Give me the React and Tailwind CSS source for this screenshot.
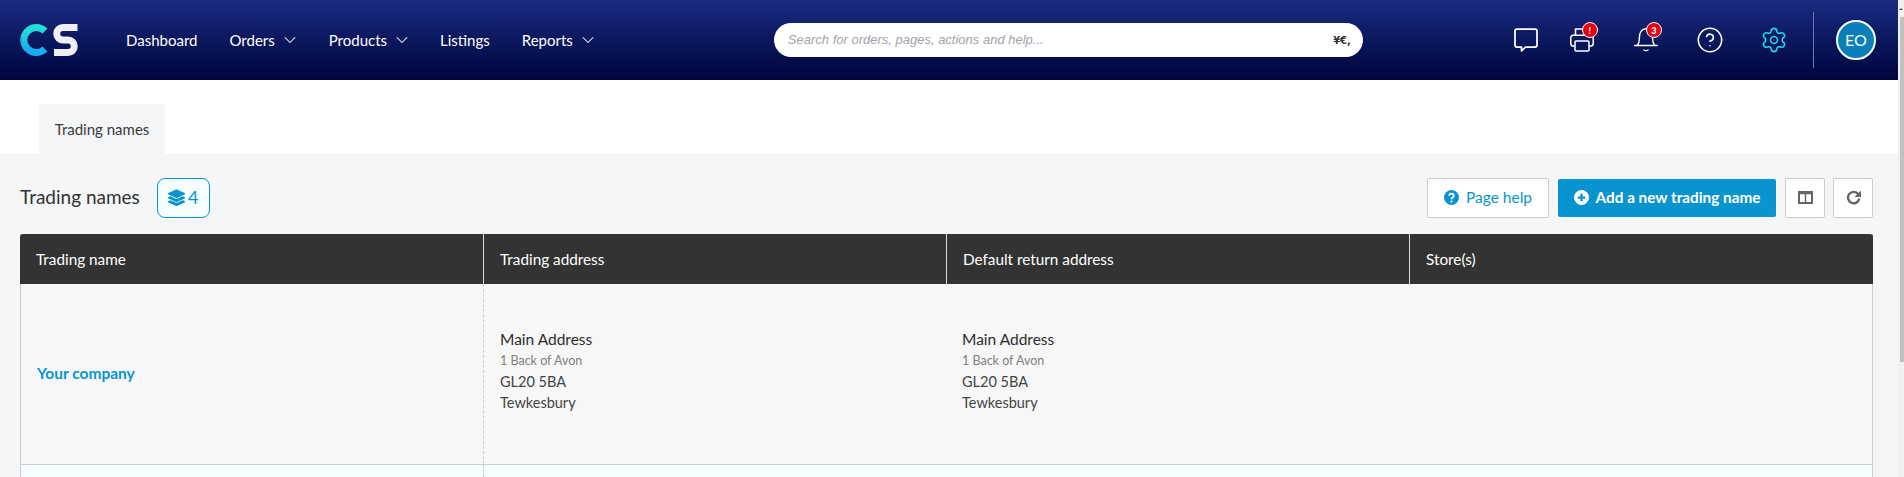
import React from "react";
import { ChevronDown, CircleHelp, Settings } from "lucide-react";

const font = "font-['Lato','Open_Sans',sans-serif]";

const NavItem = ({ label, hasMenu, className = "" }) => (
  <div className={`flex items-center gap-[5px] text-[15px] text-white ${className}`}>
    <span>{label}</span>
    {hasMenu && <ChevronDown size={20} strokeWidth={1.25} className="-mr-[3px]" />}
  </div>
);

const Logo = () => (
  <svg width="58" height="32" viewBox="0 0 58 32" className="shrink-0">
    <defs>
      <linearGradient id="cs-c" x1="0" y1="0" x2="0" y2="1">
        <stop offset="0" stopColor="#22e0d8" />
        <stop offset="1" stopColor="#1aa8f0" />
      </linearGradient>
    </defs>
    <path
      d="M25 7 A12.5 12.5 0 1 0 25 25"
      fill="none"
      stroke="url(#cs-c)"
      strokeWidth="7"
    />
    <path
      d="M57.5 3.5 H43 A6.25 6.25 0 0 0 43 16 H48 A6.25 6.25 0 0 1 48 28.5 H34"
      fill="none"
      stroke="#eef0f5"
      strokeWidth="7"
    />
  </svg>
);

const Badge = ({ text }) => (
  <span className="absolute -right-[4px] -top-[6px] flex h-[16px] w-[16px] items-center justify-center rounded-full border border-white bg-[#e8000f] text-[9px] font-black leading-none text-white">
    {text}
  </span>
);

const IconCell = ({ className = "", children }) => (
  <div className={`relative flex h-[24px] w-[24px] shrink-0 items-center justify-center ${className}`}>
    {children}
  </div>
);

const Address = () => (
  <div className="pb-[5px]">
    <div className="text-[15.5px] leading-[21px] text-[#2c2c2c]">Main Address</div>
    <div className="text-[12.5px] leading-[21px] text-[#808080]">1 Back of Avon</div>
    <div className="text-[14.5px] leading-[21px] text-[#444]">GL20 5BA</div>
    <div className="text-[14.5px] leading-[22px] text-[#444]">Tewkesbury</div>
  </div>
);

export default function App() {
  return (
    <div className={`${font} flex h-[477px] w-[1904px] overflow-hidden bg-white`}>
      <div className="min-w-0 flex-1">
        <header className="flex h-[80px] items-center bg-gradient-to-b from-[#1a2b82] to-[#02053c] pl-[20px]">
          <Logo />
          <nav className="ml-[48px] flex items-center gap-[32px]">
            <NavItem label="Dashboard" />
            <NavItem label="Orders" hasMenu />
            <NavItem label="Products" hasMenu />
            <NavItem label="Listings" className="-ml-[1px]" />
            <NavItem label="Reports" hasMenu />
          </nav>
          <div className="ml-[179px] flex h-[34px] w-[589px] items-center justify-between rounded-full bg-white pl-[14px] pr-[12px] shadow-md">
            <span className="font-['Liberation_Sans',sans-serif] text-[13px] italic text-[#a0a4ab]">
              Search for orders, pages, actions and help...
            </span>
            <span className="font-['DejaVu_Sans',sans-serif] text-[10px] font-bold text-[#333]">¥€,</span>
          </div>
          <div className="ml-[151px] flex items-center text-white">
            <IconCell>
              <svg width="24" height="24" viewBox="0 0 24 24" fill="none" stroke="currentColor" strokeWidth="1.75" strokeLinejoin="round">
                <path d="M3 1H21a2 2 0 0 1 2 2V17a2 2 0 0 1-2 2H11.5L7.5 23V19H3a2 2 0 0 1-2-2V3a2 2 0 0 1 2-2z" />
              </svg>
            </IconCell>
            <IconCell className="ml-[32px]">
              <svg width="24" height="24" viewBox="0 0 24 24" fill="none" stroke="currentColor" strokeWidth="1.5" strokeLinejoin="round">
                <path d="M5.5 7V1h12v6" />
                <path d="M5 18H3a2.2 2.2 0 0 1-2.2-2.2V9.5A2.2 2.2 0 0 1 3 7.3h18a2.2 2.2 0 0 1 2.2 2.2v6.3A2.2 2.2 0 0 1 21 18h-2" />
                <rect x="5" y="13" width="14" height="10" rx="1" />
              </svg>
              <Badge text="!" />
            </IconCell>
            <IconCell className="ml-[40px]">
              <svg width="24" height="24" viewBox="0 0 24 24" fill="none" stroke="currentColor" strokeWidth="1.4" strokeLinecap="round">
                <path d="M0.7 17.5h22.6" />
                <path d="M3.5 17c1.7-2 1.9-4 1.9-7.5C5.4 4 8 .8 12 .8s6.6 3.2 6.6 8.7c0 3.5.2 5.5 1.9 7.5" />
                <path d="M10 22q2 1.3 4 0" />
              </svg>
              <Badge text="3" />
            </IconCell>
            <IconCell className="ml-[40px]">
              <CircleHelp size={28} strokeWidth={1.35} className="shrink-0" />
            </IconCell>
            <IconCell className="ml-[40px]">
              <Settings size={28} strokeWidth={1.35} className="shrink-0 text-[#1fd5ea]" />
            </IconCell>
          </div>
          <div className="ml-[27px] h-[56px] w-px bg-[#6b78c0]" />
          <div className="ml-[22px] flex h-[40px] w-[40px] items-center justify-center rounded-full border-2 border-white bg-[#0a7fba] text-[16px] text-white">
            EO
          </div>
        </header>

        <div className="h-[74px] pl-[39px] pt-[24px]">
          <div className="flex h-[50px] w-[126px] items-center justify-center bg-[#f5f6f8] text-[15px] text-[#3a3a3a]">
            Trading names
          </div>
        </div>

        <main className="h-[323px] bg-[#f5f6f8] pl-[20px] pr-[25px]">
          <div className="flex h-[80px] items-center justify-between pt-[7px]">
            <div className="flex items-center gap-[17px]">
              <h1 className="text-[19px] text-[#333]">Trading names</h1>
              <div className="flex h-[40px] w-[53px] items-center justify-center gap-[3px] rounded-[8px] border border-[#0a94cf] bg-[#f5fdff] text-[18px] text-[#0a94cf]">
                <svg width="17" height="17" viewBox="0 0 512 512" fill="currentColor">
                  <path d="M12 124l233-106a26 26 0 0 1 22 0l233 106c17 8 17 32 0 40L267 270a26 26 0 0 1-22 0L12 164c-17-8-17-32 0-40z" />
                  <path d="M500 244l-58-26-160 72a62 62 0 0 1-52 0L70 218l-58 26c-17 8-17 32 0 40l233 105a26 26 0 0 0 22 0l233-105c17-8 17-32 0-40z" />
                  <path d="M500 364l-58-26-160 72a62 62 0 0 1-52 0L70 338l-58 26c-17 8-17 32 0 40l233 106a26 26 0 0 0 22 0l233-106c17-8 17-32 0-40z" />
                </svg>
                <span>4</span>
              </div>
            </div>
            <div className="flex items-center">
              <button className="flex h-[40px] w-[122px] items-center justify-center gap-[7px] rounded-[2px] border border-[#ccc] bg-white text-[15.5px] text-[#0a94cf]">
                <svg width="15" height="15" viewBox="0 0 16 16" className="shrink-0">
                  <circle cx="8" cy="8" r="8" fill="#0a94cf" />
                  <path d="M5.6 6.2a2.4 2.4 0 0 1 4.8.2c0 1.7-2.4 1.7-2.4 3.4" fill="none" stroke="#fff" strokeWidth="1.9" />
                  <circle cx="8" cy="12.3" r="1.2" fill="#fff" />
                </svg>
                Page help
              </button>
              <button className="ml-[9px] flex h-[38px] w-[218px] items-center justify-center gap-[7px] rounded-[2px] bg-[#0a94cf] text-[15.3px] font-bold text-white">
                <svg width="15" height="15" viewBox="0 0 16 16" className="shrink-0">
                  <circle cx="8" cy="8" r="8" fill="#fff" />
                  <path d="M8 4v8M4 8h8" stroke="#0a94cf" strokeWidth="2.4" />
                </svg>
                Add a new trading name
              </button>
              <button className="ml-[9px] flex h-[40px] w-[40px] items-center justify-center rounded-[2px] border border-[#ccc] bg-white text-[#666]">
                <svg width="15" height="13" viewBox="0 0 15 13" fill="none">
                  <rect x="1" y="1" width="13" height="11" stroke="currentColor" strokeWidth="2" />
                  <path d="M1 2h13" stroke="currentColor" strokeWidth="2.5" />
                  <path d="M7.5 2v10" stroke="currentColor" strokeWidth="1.5" />
                </svg>
              </button>
              <button className="ml-[8px] flex h-[40px] w-[40px] items-center justify-center rounded-[2px] border border-[#ccc] bg-white text-[#666]">
                <svg width="15" height="15" viewBox="0 0 15 15" fill="none">
                  <path d="M12.3 4.2A5.7 5.7 0 1 0 13.3 8.5" stroke="currentColor" strokeWidth="2.4" />
                  <path d="M15 .5v6.5H8.500z" fill="currentColor" />
                </svg>
              </button>
            </div>
          </div>

          <div className="border-x border-[#ccc]">
            <div className="-mx-px grid h-[50px] grid-cols-[463px_463px_463px_1fr] items-stretch rounded-t-[3px] bg-[#333] text-[15.3px] text-white">
              {["Trading name", "Trading address", "Default return address", "Store(s)"].map((title, i) => (
                <div key={title} className={`flex items-center pl-[16px] ${i > 0 ? "border-l border-[#ddd]" : ""}`}>
                  {title}
                </div>
              ))}
            </div>
            <div className="grid h-[181px] grid-cols-[462px_463px_463px_1fr] items-center border-b border-[#ccc] bg-[#f7f7f7]">
              <div className="pl-[16px] text-[15.5px] font-bold text-[#0a94cf]">Your company</div>
              <div className="flex h-full items-center border-l border-dashed border-[#ccc] pl-[16px]">
                <Address />
              </div>
              <div className="pl-[16px]">
                <Address />
              </div>
              <div />
            </div>
            <div className="grid h-[12px] grid-cols-[462px_1fr] bg-[#f5fdff]">
              <div />
              <div className="border-l border-dashed border-[#ccc]" />
            </div>
          </div>
        </main>
      </div>
      <div className="flex w-[6px] shrink-0 flex-col items-end bg-[#f1f1f1]">
        <div className="flex h-[17px] w-[6px] items-center justify-center">
          <div className="h-0 w-0 border-x-[2px] border-b-[2px] border-x-transparent border-b-[#505050]" />
        </div>
        <div className="h-[345px] w-[4px] bg-[#c1c1c1]" />
      </div>
    </div>
  );
}
